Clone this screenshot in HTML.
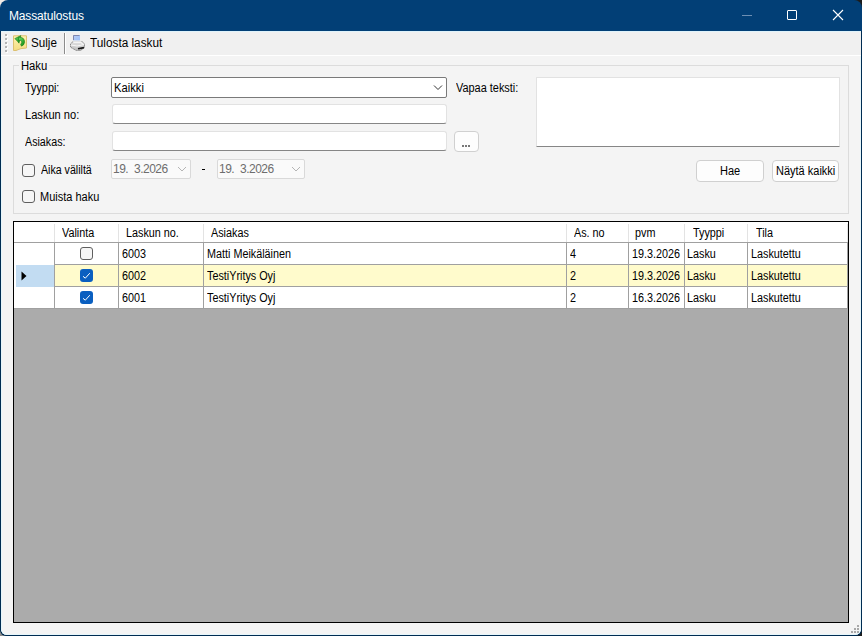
<!DOCTYPE html>
<html><head><meta charset="utf-8">
<style>
*{box-sizing:border-box;margin:0;padding:0}
html,body{width:862px;height:636px;overflow:hidden;background:#1c1c1c}
body{font-family:"Liberation Sans",sans-serif;font-size:11px;color:#000;position:relative}
.a{position:absolute}
#win{left:0;top:0;width:862px;height:636px;background:linear-gradient(#023f76 0 31px,#002c52 31px);border-radius:8px 8px 6px 6px;overflow:hidden}
#client{left:1px;top:31px;width:860px;height:604px;background:#f4f4f4;box-shadow:inset 1px 0 0 #e6f6fb,inset -1px 0 0 #e6f6fb,inset 0 -1px 0 #e6f6fb;border-radius:0 0 6px 6px}
#title{left:9px;top:9px;color:#fff;font-size:12px;letter-spacing:-0.15px;line-height:14px}
#tb{left:1px;top:31px;width:860px;height:25px;background:#f0f0f0;border-top:1px solid #dff3fb;border-bottom:1px solid #fff}
.lbl{line-height:13px;white-space:nowrap}
.tbox{background:#fff;border:1px solid #e2e2e2;border-bottom:1px solid #868686;border-radius:3px}
.btn{background:#fdfdfd;border:1px solid #d0d0d0;border-radius:4px;text-align:center}
.chk{width:13px;height:13px;border:1px solid #5f5f5f;border-radius:3px;background:#f6f6f6}
.dp{background:#fafafa;border:1px solid #d9d9d9;border-radius:2px;color:#6d6d6d}
#grid{left:13px;top:221px;width:836px;height:402px;border:1px solid #000;background:#ababab;overflow:hidden}
.cell{position:absolute;white-space:nowrap;line-height:13px;font-size:12px;transform:scaleX(0.9);transform-origin:0 0}
</style></head><body>
<div class="a" style="left:0;top:0;width:10px;height:10px;background:#f2ebe6"></div>
<div class="a" style="left:0;top:626px;width:10px;height:10px;background:#8c8c8c"></div>
<div id="win" class="a">
  <div id="client" class="a"></div>
  <div id="title" class="a">Massatulostus</div>
  <!-- title buttons -->
  <div class="a" style="left:742px;top:15px;width:10px;height:1px;background:#6d8fb3"></div>
  <div class="a" style="left:787px;top:10px;width:10px;height:10px;border:1px solid #fff;border-radius:1px"></div>
  <svg class="a" style="left:832px;top:9px" width="12" height="12" viewBox="0 0 12 12"><path d="M1 1L11 11M11 1L1 11" stroke="#fff" stroke-width="1.1"/></svg>

  <!-- toolbar -->
  <div id="tb" class="a"></div>
  <div class="a" style="left:5px;top:34px;width:2px;height:2px;background:#b4b4b4;box-shadow:1px 1px 0 #fff"></div><div class="a" style="left:5px;top:38px;width:2px;height:2px;background:#b4b4b4;box-shadow:1px 1px 0 #fff"></div><div class="a" style="left:5px;top:42px;width:2px;height:2px;background:#b4b4b4;box-shadow:1px 1px 0 #fff"></div><div class="a" style="left:5px;top:46px;width:2px;height:2px;background:#b4b4b4;box-shadow:1px 1px 0 #fff"></div><div class="a" style="left:5px;top:50px;width:2px;height:2px;background:#b4b4b4;box-shadow:1px 1px 0 #fff"></div>
  <svg class="a" style="left:11px;top:33px" width="18" height="20" viewBox="11 33 18 20">
    <defs><linearGradient id="yg" x1="0" y1="0" x2="0" y2="1"><stop offset="0" stop-color="#fdf3b0"/><stop offset="1" stop-color="#f4dc82"/></linearGradient>
    <linearGradient id="gr" x1="0" y1="0" x2="1" y2="1"><stop offset="0" stop-color="#6fe06f"/><stop offset="1" stop-color="#0a8a0a"/></linearGradient></defs>
    <path d="M13.5 35.8H26.5V48L21 48.6L16 50.5H13.5Z" fill="url(#yg)" stroke="#dcc070" stroke-width="1"/>
    <path d="M14.8 38.6L20.8 35.6L19 43.2L17.6 41.4Z" fill="url(#gr)" stroke="#0b6a0b" stroke-width="0.5"/>
    <path d="M18.5 37.2Q24.8 36.8 24.6 42.4Q24.2 45 21.5 46.2L20.6 44.6Q22.2 42.6 21.6 41.2Q20.8 39.8 18.6 40.8Z" fill="url(#gr)" stroke="#0b6a0b" stroke-width="0.5"/>
  </svg>
  <div class="a" style="left:64px;top:33px;width:1px;height:21px;background:#8c8c8c"></div>
  <div class="a" style="left:65px;top:33px;width:1px;height:21px;background:#fff"></div>
  <svg class="a" style="left:68px;top:33px" width="20" height="20" viewBox="68 33 20 20">
    <defs><linearGradient id="bg1" x1="0" y1="0" x2="1" y2="1"><stop offset="0" stop-color="#b9cdf5"/><stop offset="1" stop-color="#9ec0f7"/></linearGradient>
    <linearGradient id="gg" x1="0" y1="0" x2="0" y2="1"><stop offset="0" stop-color="#e6e6e6"/><stop offset="1" stop-color="#bdbdbd"/></linearGradient></defs>
    <path d="M73 35H80V40.5H73Z" fill="url(#bg1)"/>
    <path d="M73.5 40V35.5H79.5" fill="none" stroke="#7f87ad" stroke-width="1"/>
    <path d="M70 43.6L73.3 40.8H81.6L85 43.8V47.4L80.8 50.8H76L70 47.2Z" fill="url(#gg)"/>
    <path d="M70.5 47V43.8L73.5 41.2M81.5 41L84.5 44V47.2L80.6 50.4H76.2L70.6 47.2" fill="none" stroke="#8a8a8a" stroke-width="1" stroke-dasharray="1.2 0.6"/>
    <path d="M73.5 42.5H81L83 44.2" fill="none" stroke="#f4f4f4" stroke-width="1.2"/>
    <path d="M71 45L77 46L84 44.5" fill="none" stroke="#f7f7f7" stroke-width="1"/>
    <path d="M78 48.8L84 47.6" stroke="#151515" stroke-width="1.6"/>
  </svg>

  <!-- group box -->
  <div class="a" style="left:13px;top:65px;width:836px;height:149px;border:1px solid #dcdcdc"></div>


  <div class="a" style="left:111px;top:77px;width:336px;height:21px;background:#fff;border:1px solid #7a7a7a;border-radius:2px"></div>
  <svg class="a" style="left:433px;top:84px" width="10" height="7" viewBox="0 0 10 7"><path d="M1 1.5L5 5.5L9 1.5" fill="none" stroke="#333" stroke-width="1"/></svg>

  <div class="a tbox" style="left:112px;top:104px;width:335px;height:20px"></div>
  <div class="a tbox" style="left:112px;top:131px;width:335px;height:20px"></div>
  <div class="a btn" style="left:454px;top:131px;width:25px;height:21px"></div><div class="a" style="left:461.5px;top:144.5px;width:2px;height:2px;background:#4a4a4a;border-radius:1px"></div><div class="a" style="left:464.5px;top:144.5px;width:2px;height:2px;background:#4a4a4a;border-radius:1px"></div><div class="a" style="left:467.5px;top:144.5px;width:2px;height:2px;background:#4a4a4a;border-radius:1px"></div>

  <div class="a tbox" style="left:536px;top:77px;width:304px;height:70px;border-radius:1px"></div>

  <div class="a btn" style="left:696px;top:160px;width:68px;height:22px;"></div>
  <div class="a btn" style="left:772px;top:160px;width:67px;height:22px;"></div>

  <div class="a chk" style="left:22px;top:164px"></div>
  <div class="a chk" style="left:22px;top:190px"></div>

  <div class="a dp" style="left:111px;top:159px;width:80px;height:20px"></div>
  <div class="a lbl" style="left:113px;top:163px;font-size:12px;color:#6d6d6d;letter-spacing:-0.5px">19.</div><div class="a lbl" style="left:134px;top:163px;font-size:12px;color:#6d6d6d;letter-spacing:-0.5px">3.2026</div>
  <svg class="a" style="left:177px;top:166px" width="10" height="7" viewBox="0 0 10 7"><path d="M1 1L5 5L9 1" fill="none" stroke="#b5b5b5" stroke-width="1"/></svg>
  <div class="a" style="left:202px;top:169px;width:3px;height:1px;background:#000"></div>
  <div class="a dp" style="left:217px;top:159px;width:88px;height:20px"></div>
  <div class="a lbl" style="left:219px;top:163px;font-size:12px;color:#6d6d6d;letter-spacing:-0.5px">19.</div><div class="a lbl" style="left:240px;top:163px;font-size:12px;color:#6d6d6d;letter-spacing:-0.5px">3.2026</div>
  <svg class="a" style="left:291px;top:166px" width="10" height="7" viewBox="0 0 10 7"><path d="M1 1L5 5L9 1" fill="none" stroke="#b5b5b5" stroke-width="1"/></svg>

  <!--LABELS-->
  <div class="a lbl" style="left:31.00px;top:37.00px;font-size:12px;transform:scaleX(0.972);transform-origin:0 0;">Sulje</div>
  <div class="a lbl" style="left:90.00px;top:37.00px;font-size:12px;transform:scaleX(0.982);transform-origin:0 0;">Tulosta laskut</div>
  <div class="a lbl" style="left:21.00px;top:60.00px;font-size:12px;transform:scaleX(0.940);transform-origin:0 0;padding:0 2px;margin-left:-2px;background:#f3f3f3;">Haku</div>
  <div class="a lbl" style="left:25.00px;top:82.00px;font-size:12px;transform:scaleX(0.903);transform-origin:0 0;">Tyyppi:</div>
  <div class="a lbl" style="left:25.00px;top:109.00px;font-size:12px;transform:scaleX(0.924);transform-origin:0 0;">Laskun no:</div>
  <div class="a lbl" style="left:25.00px;top:136.00px;font-size:12px;transform:scaleX(0.892);transform-origin:0 0;">Asiakas:</div>
  <div class="a lbl" style="left:114.00px;top:82.00px;font-size:12px;transform:scaleX(0.933);transform-origin:0 0;">Kaikki</div>
  <div class="a lbl" style="left:456.00px;top:82.00px;font-size:12px;transform:scaleX(0.910);transform-origin:0 0;">Vapaa teksti:</div>
  <div class="a lbl" style="left:41.00px;top:164.00px;font-size:12px;transform:scaleX(0.885);transform-origin:0 0;">Aika väliltä</div>
  <div class="a lbl" style="left:40.00px;top:191.00px;font-size:12px;transform:scaleX(0.916);transform-origin:0 0;">Muista haku</div>
  <div class="a lbl" style="left:720.00px;top:165.00px;font-size:12px;transform:scaleX(0.920);transform-origin:0 0;">Hae</div>
  <div class="a lbl" style="left:776.00px;top:165.00px;font-size:12px;transform:scaleX(0.916);transform-origin:0 0;">Näytä kaikki</div>
<!--/LABELS-->
  <!-- grid -->
  <div id="grid" class="a">
<div class="a" style="left:0;top:0;width:834px;height:87px;background:#fff"></div>
<div class="a" style="left:41px;top:43px;width:792px;height:21px;background:#fffbcc"></div>
<div class="a" style="left:2px;top:43px;width:38px;height:22px;background:#c2dcf2"></div>
<div class="a" style="left:0px;top:20px;width:834px;height:1px;background:#a0a0a0"></div>
<div class="a" style="left:40px;top:42px;width:794px;height:1px;background:#a0a0a0"></div>
<div class="a" style="left:40px;top:64px;width:794px;height:1px;background:#a0a0a0"></div>
<div class="a" style="left:0px;top:86px;width:834px;height:1px;background:#a0a0a0"></div>
<div class="a" style="left:40px;top:2px;width:1px;height:18px;background:#e3e3e3"></div>
<div class="a" style="left:40px;top:20px;width:1px;height:67px;background:#a0a0a0"></div>
<div class="a" style="left:104px;top:2px;width:1px;height:18px;background:#e3e3e3"></div>
<div class="a" style="left:104px;top:20px;width:1px;height:67px;background:#a0a0a0"></div>
<div class="a" style="left:189px;top:2px;width:1px;height:18px;background:#e3e3e3"></div>
<div class="a" style="left:189px;top:20px;width:1px;height:67px;background:#a0a0a0"></div>
<div class="a" style="left:552px;top:2px;width:1px;height:18px;background:#e3e3e3"></div>
<div class="a" style="left:552px;top:20px;width:1px;height:67px;background:#a0a0a0"></div>
<div class="a" style="left:614px;top:2px;width:1px;height:18px;background:#e3e3e3"></div>
<div class="a" style="left:614px;top:20px;width:1px;height:67px;background:#a0a0a0"></div>
<div class="a" style="left:670px;top:2px;width:1px;height:18px;background:#e3e3e3"></div>
<div class="a" style="left:670px;top:20px;width:1px;height:67px;background:#a0a0a0"></div>
<div class="a" style="left:733px;top:2px;width:1px;height:18px;background:#e3e3e3"></div>
<div class="a" style="left:733px;top:20px;width:1px;height:67px;background:#a0a0a0"></div>
<div class="a" style="left:833px;top:2px;width:1px;height:18px;background:#e3e3e3"></div>
<div class="a" style="left:833px;top:20px;width:1px;height:67px;background:#a0a0a0"></div>
<div class="cell" style="left:48.2px;top:5.0px">Valinta</div>
<div class="cell" style="left:112.4px;top:5.0px">Laskun no.</div>
<div class="cell" style="left:197.0px;top:5.0px">Asiakas</div>
<div class="cell" style="left:560.2px;top:5.0px">As. no</div>
<div class="cell" style="left:621.0px;top:5.0px">pvm</div>
<div class="cell" style="left:679.0px;top:5.0px">Tyyppi</div>
<div class="cell" style="left:741.5px;top:5.0px">Tila</div>
<div class="cell" style="left:107.5px;top:26.0px">6003</div>
<div class="cell" style="left:192.5px;top:26.0px">Matti Meikäläinen</div>
<div class="cell" style="left:556.0px;top:26.0px">4</div>
<div class="cell" style="left:617.6px;top:26.0px">19.3.2026</div>
<div class="cell" style="left:673.4px;top:26.0px">Lasku</div>
<div class="cell" style="left:736.7px;top:26.0px">Laskutettu</div>
<div class="a chk" style="left:66px;top:25px"></div>
<div class="cell" style="left:107.5px;top:48.0px">6002</div>
<div class="cell" style="left:192.5px;top:48.0px">TestiYritys Oyj</div>
<div class="cell" style="left:556.0px;top:48.0px">2</div>
<div class="cell" style="left:617.6px;top:48.0px">19.3.2026</div>
<div class="cell" style="left:673.4px;top:48.0px">Lasku</div>
<div class="cell" style="left:736.7px;top:48.0px">Laskutettu</div>
<svg class="a" style="left:66px;top:47px" width="13" height="13" viewBox="0 0 13 13"><rect x="0" y="0" width="13" height="13" rx="3" fill="#0a5fc0"/><path d="M3 7.3L5.3 9.2L9.8 4.2" fill="none" stroke="#fff" stroke-width="1"/></svg>
<div class="cell" style="left:107.5px;top:70.0px">6001</div>
<div class="cell" style="left:192.5px;top:70.0px">TestiYritys Oyj</div>
<div class="cell" style="left:556.0px;top:70.0px">2</div>
<div class="cell" style="left:617.6px;top:70.0px">16.3.2026</div>
<div class="cell" style="left:673.4px;top:70.0px">Lasku</div>
<div class="cell" style="left:736.7px;top:70.0px">Laskutettu</div>
<svg class="a" style="left:66px;top:69px" width="13" height="13" viewBox="0 0 13 13"><rect x="0" y="0" width="13" height="13" rx="3" fill="#0a5fc0"/><path d="M3 7.3L5.3 9.2L9.8 4.2" fill="none" stroke="#fff" stroke-width="1"/></svg>
<svg class="a" style="left:7px;top:49px" width="6" height="10" viewBox="0 0 6 10"><path d="M0.5 0.5L5.5 5L0.5 9.5Z" fill="#000"/></svg>
  </div>

  <!-- resize grip -->
<div class="a" style="left:857px;top:625px;width:2px;height:2px;background:#a8a8a8"></div><div class="a" style="left:854px;top:628px;width:2px;height:2px;background:#a8a8a8"></div><div class="a" style="left:857px;top:628px;width:2px;height:2px;background:#a8a8a8"></div><div class="a" style="left:851px;top:631px;width:2px;height:2px;background:#a8a8a8"></div><div class="a" style="left:854px;top:631px;width:2px;height:2px;background:#a8a8a8"></div><div class="a" style="left:857px;top:631px;width:2px;height:2px;background:#a8a8a8"></div>
</div>
</body></html>
